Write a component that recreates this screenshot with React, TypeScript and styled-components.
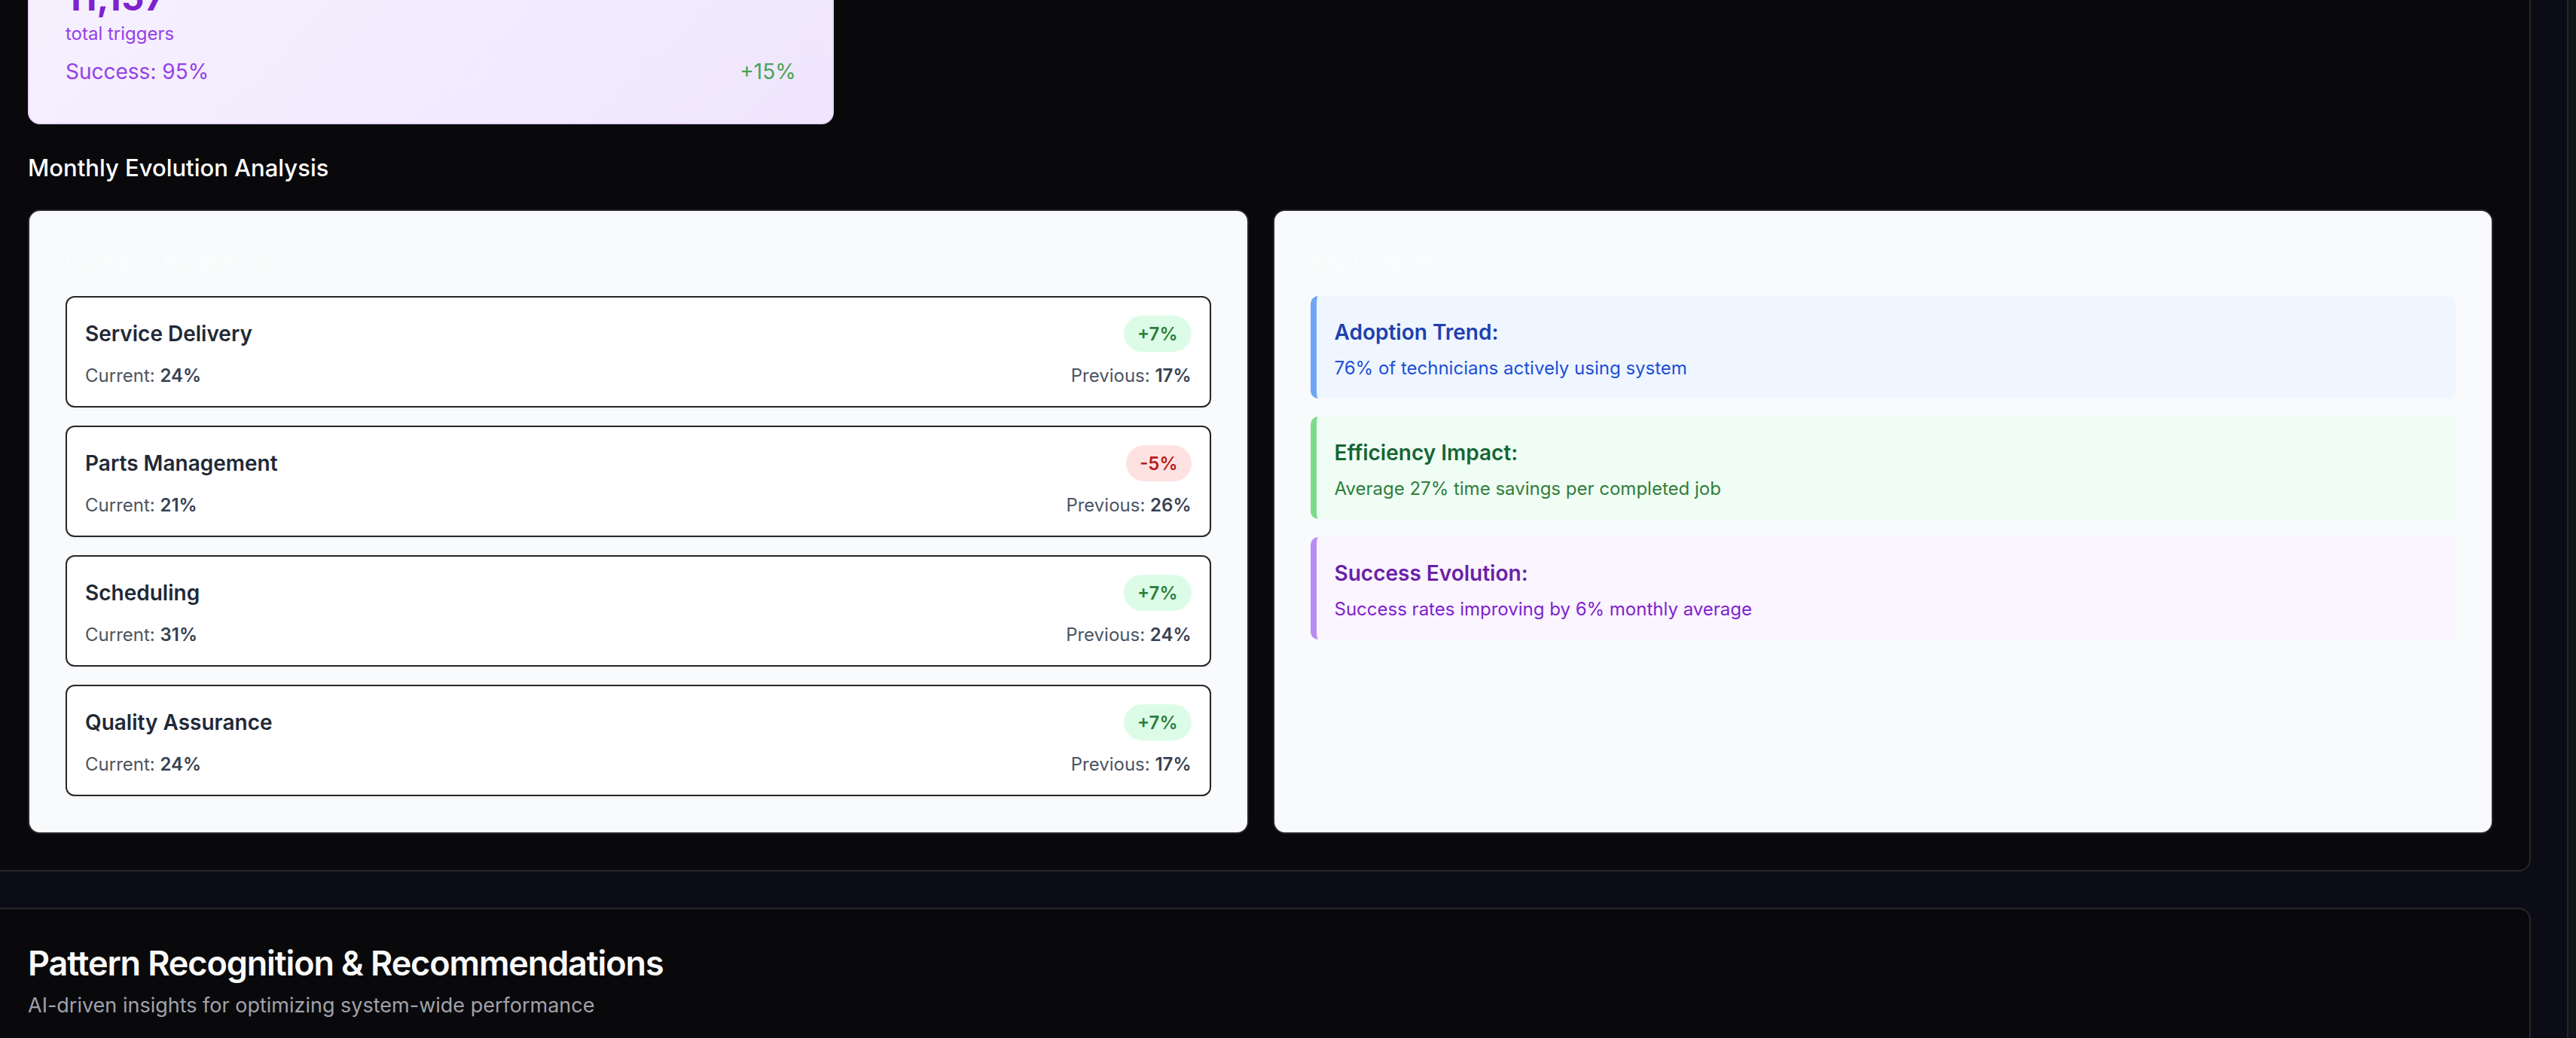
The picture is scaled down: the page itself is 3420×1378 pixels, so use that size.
import React from "react";
import styled, { createGlobalStyle } from "styled-components";

const GlobalStyle = createGlobalStyle`
  html, body { margin: 0; padding: 0; background: #0b0c16; }
  body {
    font-family: Inter, "Noto Sans", "Liberation Sans", sans-serif;
    -webkit-font-smoothing: antialiased;
    overflow: hidden;
  }
  * { box-sizing: border-box; }
`;

const Page = styled.div`
  display: flex;
  width: 3420px;
  height: 1378px;
  overflow: hidden;
  background: #0b0c16;
`;

const Main = styled.main`
  flex: 1;
  min-width: 0;
  display: flex;
  flex-direction: column;
  gap: 48px;
  margin: -135px 0 0 -13px;
  padding-right: 48px;
`;

const Aside = styled.aside`
  flex: none;
  width: 12px;
  border-left: 2px solid #27272a;
  background: #111318;
`;

const Section = styled.section<{ $minHeight?: number }>`
  background: #09090b;
  border: 2px solid #27272a;
  border-radius: 16px;
  padding: 48px;
  min-height: ${(p) => (p.$minHeight ? `${p.$minHeight}px` : "auto")};
`;

const TopGrid = styled.div`
  display: grid;
  grid-template-columns: repeat(3, 1fr);
  gap: 32px;
`;

const StatCard = styled.div`
  background: linear-gradient(135deg, #f7f1ff 0%, #efe6fd 100%);
  border: 2px solid #e9d5ff;
  border-radius: 16px;
  padding: 48px;
`;

const BigNumber = styled.div`
  font-size: 48px;
  line-height: 64px;
  font-weight: 700;
  color: #7e22ce;
`;

const StatLabel = styled.div`
  font-size: 24px;
  line-height: 32px;
  color: #9340e8;
`;

const StatFooter = styled.div`
  display: flex;
  justify-content: space-between;
  margin-top: 14px;
  font-size: 28px;
  line-height: 40px;
`;

const StatText = styled.span<{ $tone: "purple" | "green" }>`
  color: ${(p) => (p.$tone === "green" ? "#47a556" : "#9340e8")};
`;

const Heading = styled.h2`
  margin: 37px 0 34px;
  font-size: 31px;
  line-height: 42px;
  font-weight: 500;
  color: #ffffff;
`;

const PanelGrid = styled.div`
  display: grid;
  grid-template-columns: 1fr 1fr;
  gap: 32px;
`;

const Panel = styled.div`
  background: #f9fafb;
  border: 2px solid #27272a;
  border-radius: 16px;
  padding: 48px;
`;

const PanelTitle = styled.h3`
  margin: 0 0 25px;
  font-size: 28px;
  line-height: 40px;
  font-weight: 500;
  color: #fbfcfd;
`;

const List = styled.div`
  display: flex;
  flex-direction: column;
  gap: 24px;
`;

const CategoryRow = styled.div`
  background: #ffffff;
  border: 2px solid #27272a;
  border-radius: 12px;
  padding: 24px;
  box-shadow: 0 2px 4px rgba(0, 0, 0, 0.04);
`;

const RowLine = styled.div<{ $gap?: number }>`
  display: flex;
  justify-content: space-between;
  align-items: center;
  margin-top: ${(p) => (p.$gap ? `${p.$gap}px` : "0")};
`;

const RowTitle = styled.span`
  font-size: 28px;
  line-height: 40px;
  font-weight: 600;
  color: #1f2937;
`;

const Badge = styled.span<{ $up: boolean }>`
  display: inline-flex;
  align-items: center;
  height: 48px;
  padding: 0 18px;
  border-radius: 999px;
  font-size: 24px;
  font-weight: 600;
  background: ${(p) => (p.$up ? "#dcfce7" : "#fee2e2")};
  color: ${(p) => (p.$up ? "#2f7d3c" : "#b91c1c")};
`;

const Meta = styled.span`
  font-size: 24px;
  line-height: 32px;
  color: #4b5563;

  b {
    font-weight: 600;
    color: #374151;
  }
`;

type Tone = "blue" | "green" | "purple";

const toneMap: Record<Tone, { bg: string; bar: string; title: string; text: string }> = {
  blue: { bg: "#eff6ff", bar: "#6ea6f7", title: "#1e40af", text: "#1d4ed8" },
  green: { bg: "#f0fdf4", bar: "#7ddc8c", title: "#166534", text: "#2f7d3c" },
  purple: { bg: "#faf5ff", bar: "#b98cf5", title: "#6b21a8", text: "#7e22ce" },
};

const InsightBox = styled.div<{ $tone: Tone }>`
  background: ${(p) => toneMap[p.$tone].bg};
  border-left: 8px solid ${(p) => toneMap[p.$tone].bar};
  border-radius: 10px;
  padding: 24px;
`;

const InsightTitle = styled.div<{ $tone: Tone }>`
  font-size: 28px;
  line-height: 48px;
  font-weight: 600;
  color: ${(p) => toneMap[p.$tone].title};
`;

const InsightText = styled.div<{ $tone: Tone }>`
  margin-top: 8px;
  font-size: 24px;
  line-height: 32px;
  color: ${(p) => toneMap[p.$tone].text};
`;

const CardTitle = styled.h2`
  margin: 0;
  font-size: 45px;
  line-height: 48px;
  font-weight: 600;
  letter-spacing: -0.025em;
  color: #fafafa;
`;

const CardDescription = styled.p`
  margin: 12px 0 0;
  font-size: 27px;
  line-height: 40px;
  color: #a1a1aa;
`;

const categories = [
  { name: "Service Delivery", current: 24, previous: 17, change: 7 },
  { name: "Parts Management", current: 21, previous: 26, change: -5 },
  { name: "Scheduling", current: 31, previous: 24, change: 7 },
  { name: "Quality Assurance", current: 24, previous: 17, change: 7 },
];

const insights: { tone: Tone; title: string; text: string }[] = [
  { tone: "blue", title: "Adoption Trend:", text: "76% of technicians actively using system" },
  { tone: "green", title: "Efficiency Impact:", text: "Average 27% time savings per completed job" },
  { tone: "purple", title: "Success Evolution:", text: "Success rates improving by 6% monthly average" },
];

export default function App() {
  return (
    <Page>
      <GlobalStyle />
      <Main>
        <Section>
          <TopGrid>
            <StatCard>
              <BigNumber>11,157</BigNumber>
              <StatLabel>total triggers</StatLabel>
              <StatFooter>
                <StatText $tone="purple">Success: 95%</StatText>
                <StatText $tone="green">+15%</StatText>
              </StatFooter>
            </StatCard>
          </TopGrid>

          <Heading>Monthly Evolution Analysis</Heading>

          <PanelGrid>
            <Panel>
              <PanelTitle>Category Breakdown</PanelTitle>
              <List>
                {categories.map((c) => (
                  <CategoryRow key={c.name}>
                    <RowLine>
                      <RowTitle>{c.name}</RowTitle>
                      <Badge $up={c.change >= 0}>
                        {c.change >= 0 ? `+${c.change}%` : `${c.change}%`}
                      </Badge>
                    </RowLine>
                    <RowLine $gap={16}>
                      <Meta>
                        Current: <b>{c.current}%</b>
                      </Meta>
                      <Meta>
                        Previous: <b>{c.previous}%</b>
                      </Meta>
                    </RowLine>
                  </CategoryRow>
                ))}
              </List>
            </Panel>

            <Panel>
              <PanelTitle>Key Insights</PanelTitle>
              <List>
                {insights.map((i) => (
                  <InsightBox key={i.title} $tone={i.tone}>
                    <InsightTitle $tone={i.tone}>{i.title}</InsightTitle>
                    <InsightText $tone={i.tone}>{i.text}</InsightText>
                  </InsightBox>
                ))}
              </List>
            </Panel>
          </PanelGrid>
        </Section>

        <Section $minHeight={400}>
          <CardTitle>Pattern Recognition &amp; Recommendations</CardTitle>
          <CardDescription>AI-driven insights for optimizing system-wide performance</CardDescription>
        </Section>
      </Main>
      <Aside />
    </Page>
  );
}
